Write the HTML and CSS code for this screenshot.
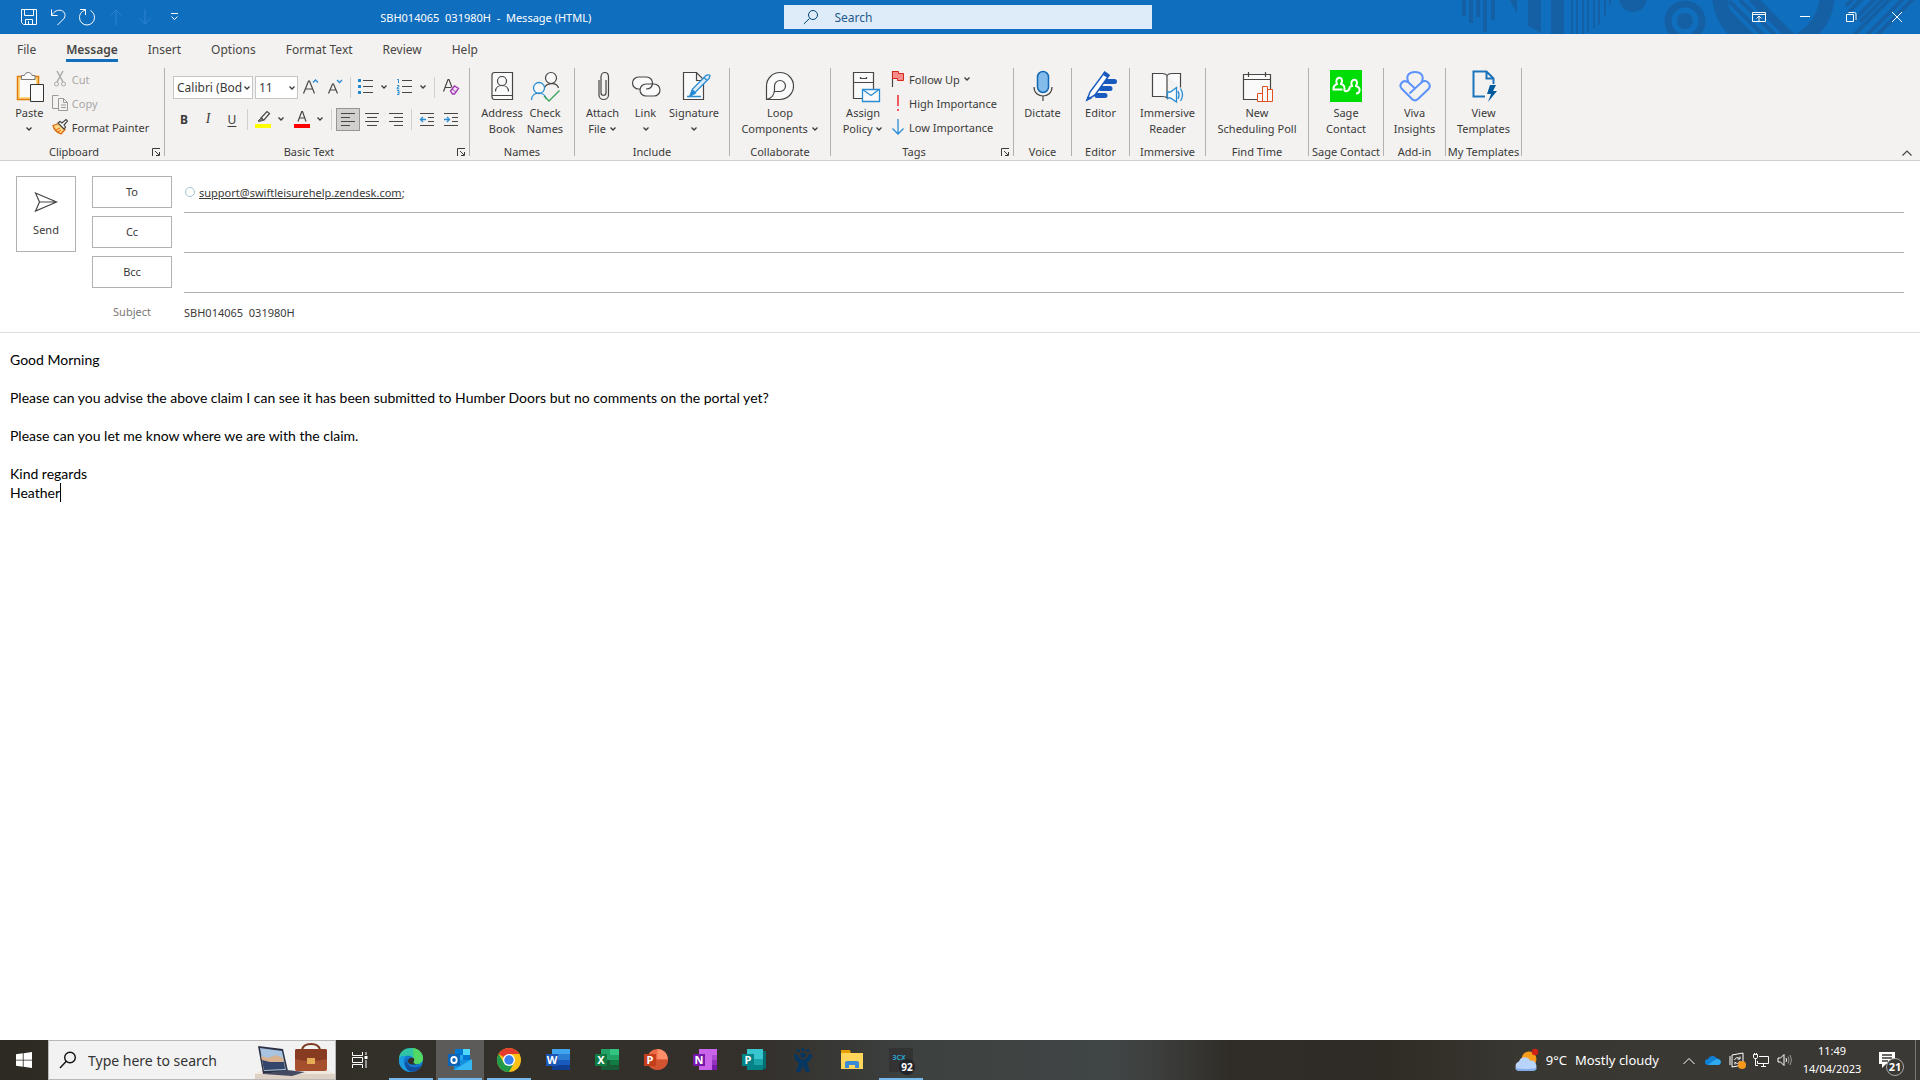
FILE: index.html
```html
<!DOCTYPE html>
<html lang="en">
<head>
    <meta charset="UTF-8">
    <meta name="viewport" content="width=device-width, initial-scale=1.0">
    <title>SBH014065 031980H - Message (HTML)</title>
    <link rel="stylesheet" href="styles.css">
</head>
<body>
    <!-- shared glyphs -->
    <svg class="defs" aria-hidden="true">
        <symbol id="chev" viewBox="0 0 8 8"><path d="M1.500 2.500 4 5l2.500-2.500" fill="none" stroke="currentColor" stroke-width="1.300"/></symbol>
        <symbol id="launcher" viewBox="0 0 9 9"><path d="M.5 8V.5H8M3 3l4 4M7.500 4v3.500H4" fill="none" stroke="currentColor"/></symbol>
    </svg>

    <header class="titlebar">
        <svg class="art" viewBox="0 0 470 34" aria-hidden="true">
            <g fill="#1560a4">
                <path d="M12 0h4v16h-4zM19 0h4v23h-4zM26 0h4v17h-4zM33 0h4v32h-4zM41 0h4v20h-4z"/>
                <path d="M60 0h7v14zM78 0h13v33l-13-7zM101 0h13v34h-13z"/>
                <path d="M121 0h2v34h-2zM126 0h2v34h-2zM132 0h2v34h-2zM137 0h2v32l-2 1zM143 0h2v28l-2 1zM148 0h2v24l-2 2zM154 0h2v15l-2 2zM159 0h2v4l-2 3z"/>
                <circle cx="183" cy="-2" r="14"/>
                <circle cx="235" cy="21" r="8"/>
            </g>
            <g fill="none" stroke="#1560a4">
                <circle cx="235" cy="21" r="17" stroke-width="7"/>
                <circle cx="323.500" cy="-7" r="54" stroke-width="15"/>
                <path d="M277 10l26 26M279 1l35 35M290 0l36 36" stroke-width="4"/>
                <path d="M302-2l40 40" stroke-width="9"/>
                <path d="M396 6l8-8M399 12l14-14M404 20l22-22M410 22l24-24M403 36l38-38M416 36l38-38M426 36l38-38" stroke-width="4"/>
            </g>
        </svg>
        <div class="title-left">
            <div class="quick">
                <button aria-label="Save"><svg width="18" height="18" viewBox="0 0 18 18"><path d="M1.500 1.500h15v15h-13l-2-2zM4.500 1.500v6h9v-6M5.500 16.500v-5h7v5M8.500 13v3"/></svg></button>
                <button aria-label="Undo"><svg width="18" height="18" viewBox="0 0 18 18"><path d="M2.500 1.500v6h6M2.500 7.500C5 3 9 1.500 12.500 2.500c4 1.500 4.500 6 2 8.500l-6 6"/></svg></button>
                <button aria-label="Redo"><svg width="18" height="18" viewBox="0 0 18 18"><path d="M2 1.500h5.500V7M7.500 2C3 3.500 1.500 6.500 1.500 9.500a7.500 7.500 0 0 0 15 0c0-3-1.500-5.500-4-7"/></svg></button>
                <button class="off" aria-label="Previous item"><svg width="18" height="18" viewBox="0 0 18 18"><path d="M9 17V2M3.500 7.500 9 2l5.500 5.500"/></svg></button>
                <button class="off" aria-label="Next item"><svg width="18" height="18" viewBox="0 0 18 18"><path d="M9 1v15M3.500 10.500 9 16l5.500-5.500"/></svg></button>
                <button aria-label="Customize toolbar"><svg width="18" height="18" viewBox="0 0 18 18"><path d="M6 5.500h7M6.500 8.500l3 3 3-3"/></svg></button>
            </div>
            <h1>SBH014065  031980H  -  Message (HTML)</h1>
        </div>
        <label class="search">
            <svg width="16" height="16" viewBox="0 0 16 16"><circle cx="10" cy="6" r="4.500"/><path d="M6.500 9.500.800 15"/></svg>
            <input type="text" placeholder="Search" aria-label="Search">
        </label>
        <div class="window-buttons">
            <button aria-label="Ribbon display options"><svg width="14" height="12" viewBox="0 0 14 12"><path d="M.5 1.500h13v9H.5zM.5 3.500h13M7 10V5.500M4.500 7.500 7 5l2.500 2.500"/></svg></button>
            <button aria-label="Minimize"><svg width="10" height="12" viewBox="0 0 10 12"><path d="M0 5.500h10"/></svg></button>
            <button aria-label="Restore"><svg width="11" height="12" viewBox="0 0 11 12"><path d="M.5 3.500h7v7h-7zM2.500 1.500h6q1.500 0 1.500 1.500v6"/></svg></button>
            <button aria-label="Close"><svg width="12" height="12" viewBox="0 0 12 12"><path d="m1 1 10 10M11 1 1 11"/></svg></button>
        </div>
    </header>

    <nav class="tabs">
        <a href="#">File</a>
        <a href="#" class="active">Message</a>
        <a href="#">Insert</a>
        <a href="#">Options</a>
        <a href="#">Format Text</a>
        <a href="#">Review</a>
        <a href="#">Help</a>
    </nav>

    <section class="ribbon" aria-label="Ribbon">
        <div class="group clipboard">
            <div class="tools">
                <button class="big">
                    <svg width="32" height="32" viewBox="0 0 32 32"><path d="M4 7h22v23H4z" fill="#fcd885"/><path d="M4.500 6.500h21v23h-21z" fill="none" stroke="#e07b0c" stroke-width="1.500"/><path d="M7 10h16v17H7z" fill="#fafafa"/><path d="M8.500 9.500v-4h3c.5-4 7-4 7.500 0h3v4z" fill="#fafafa" stroke="#777"/><path d="M17.500 14.500h13v17h-13z" fill="#fafafa" stroke="#333"/></svg>
                    <span>Paste</span>
                    <svg class="chev"><use href="#chev"/></svg>
                </button>
                <div class="stack">
                    <button class="small" disabled><svg width="18" height="16" viewBox="0 0 18 16"><path d="m6 0 6 11M12 0 6 11" stroke="#aaa" fill="none" stroke-width="1.500"/><circle cx="5.500" cy="13" r="2" fill="none" stroke="#aaa"/><circle cx="12.500" cy="13" r="2" fill="none" stroke="#aaa"/></svg>Cut</button>
                    <button class="small" disabled><svg width="18" height="16" viewBox="0 0 18 16"><path d="M7 13.500H1.500V.5h6M7.500 3.500h5l4 4v8h-9zM12.500 3.500v4h4M10 10h5M10 12.500h5" stroke="#999" fill="none"/></svg>Copy</button>
                    <button class="small"><svg width="18" height="16" viewBox="0 0 18 16"><path d="m2 6.500 6-2 6 6-4 4.500C5 13 3 11 2 6.500z" fill="#fcd885" stroke="#e0660c" stroke-width="1.300"/><path d="m5 11 4-2M7 13l3-2" stroke="#e0660c"/><path d="m7 4 2-1.500 2 1.500 4-3.500 1.500 1.500L13 6l1.500 2-1.500 2z" fill="#fff" stroke="#444" stroke-width="1.200"/></svg>Format Painter</button>
                </div>
            </div>
            <footer class="more">Clipboard<button class="launcher" aria-label="Clipboard options"><svg><use href="#launcher"/></svg></button></footer>
        </div>

        <div class="group basic">
            <div class="tools rows">
                <div class="row">
                    <span class="combo font"><select aria-label="Font"><option>Calibri (Bod</option></select><svg class="chev"><use href="#chev"/></svg></span>
                    <span class="combo size"><select aria-label="Font size"><option>11</option></select><svg class="chev"><use href="#chev"/></svg></span>
                    <button class="ico" aria-label="Grow font"><svg width="18" height="18" viewBox="0 0 18 18"><path d="M1.500 15.500 6.500 3h1l5 12.500M3.500 11h7" class="ink"/><path d="m11 4.500 2.500-2.500L16 4.500" class="blue"/></svg></button>
                    <button class="ico" aria-label="Shrink font"><svg width="18" height="18" viewBox="0 0 18 18"><path d="M2.500 15.500 6.500 6h1l4 9.500M4 12h6" class="ink"/><path d="m11 2 2.500 2.500L16 2" class="blue"/></svg></button>
                    <i class="sep"></i>
                    <button class="ico" aria-label="Bullets"><svg width="18" height="18" viewBox="0 0 18 18"><path d="M1 1h3v3H1zM1 7h3v3H1zM1 13h3v3H1z" fill="#1e88d2"/><path d="M6 2.500h10M6 8.500h10M6 14.500h10" class="ink"/></svg></button>
                    <button class="drop" aria-label="Bullet styles"><svg class="chev"><use href="#chev"/></svg></button>
                    <button class="ico" aria-label="Numbering"><svg width="18" height="18" viewBox="0 0 18 18"><path d="M1 1.500h1.500V5M1 7.500h2v1.300l-2 1v1h2.300M1 12.500h2v4H1M1.500 14.500H3" class="blue thin"/><path d="M6 2.500h10M6 8.500h10M6 14.500h10" class="ink"/></svg></button>
                    <button class="drop" aria-label="Number styles"><svg class="chev"><use href="#chev"/></svg></button>
                    <i class="sep wide"></i>
                    <button class="ico" aria-label="Clear formatting"><svg width="18" height="18" viewBox="0 0 18 18"><path d="M1.500 13.500 6 1.500h1l3 8M3 9.500h6" class="ink"/><path d="m8.500 13 4-5 4 2.500-4 5.500h-2z" fill="#f3e3f6" stroke="#a33bb5" stroke-width="1.400"/><path d="m10 11 4 3" stroke="#a33bb5"/></svg></button>
                </div>
                <div class="row">
                    <button class="ico bold">B</button>
                    <button class="ico italic">I</button>
                    <button class="ico under">U</button>
                    <i class="sep"></i>
                    <button class="ico" aria-label="Highlight colour"><svg width="18" height="18" viewBox="0 0 18 18"><path d="m7 8 6-6.500 2.500 2L10 10z" fill="#fafafa" class="ink"/><path d="m7 8-3 3 1.500.500 4.500-1.500-3-2z" fill="#777" stroke="#555"/><path d="M1 14h16v4H1z" fill="#ff0"/></svg></button>
                    <button class="drop" aria-label="Highlight colours"><svg class="chev"><use href="#chev"/></svg></button>
                    <button class="ico gap" aria-label="Font colour"><svg width="18" height="18" viewBox="0 0 18 18"><path d="M5 11.500 8.700 1.500h.8l3.500 10M6.500 8h5" class="ink"/><path d="M1 14h16v4H1z" fill="red"/></svg></button>
                    <button class="drop" aria-label="Font colours"><svg class="chev"><use href="#chev"/></svg></button>
                    <i class="sep wide"></i>
                    <button class="ico pressed" aria-label="Align left"><svg width="16" height="16" viewBox="0 0 16 16"><path d="M1 2.500h14M1 6.500h9M1 10.500h14M1 14.500h9" class="ink"/></svg></button>
                    <button class="ico" aria-label="Center"><svg width="16" height="16" viewBox="0 0 16 16"><path d="M1 2.500h14M3 6.500h10M1 10.500h14M3 14.500h10" class="ink"/></svg></button>
                    <button class="ico" aria-label="Align right"><svg width="16" height="16" viewBox="0 0 16 16"><path d="M1 2.500h14M6 6.500h9M1 10.500h14M6 14.500h9" class="ink"/></svg></button>
                    <i class="sep"></i>
                    <button class="ico" aria-label="Decrease indent"><svg width="16" height="16" viewBox="0 0 16 16"><path d="M1 2.500h14M9 6.500h6M9 10.500h6M1 14.500h14" class="ink"/><path d="M7 8.500H1.500M4 6 1.500 8.500 4 11" class="blue"/></svg></button>
                    <button class="ico" aria-label="Increase indent"><svg width="16" height="16" viewBox="0 0 16 16"><path d="M1 2.500h14M9 6.500h6M9 10.500h6M1 14.500h14" class="ink"/><path d="M1 8.500h5.500M4 6l2.500 2.500L4 11" class="blue"/></svg></button>
                </div>
            </div>
            <footer class="more">Basic Text<button class="launcher" aria-label="Font options"><svg><use href="#launcher"/></svg></button></footer>
        </div>

        <div class="group names">
            <div class="tools">
                <button class="big">
                    <svg width="32" height="32" viewBox="0 0 32 32"><path d="M8.500 2.500h18v27h-18q-2.500 0-2.500-2.500v-22q0-2.500 2.500-2.500zM6 25.500h20.500" fill="#fafafa" class="ink"/><circle cx="16" cy="11" r="4.500" class="ink"/><path d="M9.500 21.500c0-8 13-8 13 0" class="ink"/></svg>
                    <span>Address<br>Book</span>
                </button>
                <button class="big">
                    <svg width="32" height="32" viewBox="0 0 32 32"><circle cx="22" cy="8" r="5.500" fill="#fafafa" class="ink"/><path d="M15 19c2-7 13-7 14.500-1" class="ink"/><circle cx="10" cy="18" r="5.500" fill="#fafafa" class="blue"/><path d="M2.500 30c0-9 13-9 15-1" class="blue"/><path d="m15 26 5 5L30.500 20.500" stroke="#3da35d" stroke-width="1.400" fill="none"/></svg>
                    <span>Check<br>Names</span>
                </button>
            </div>
            <footer>Names</footer>
        </div>

        <div class="group include">
            <div class="tools">
                <button class="big">
                    <svg width="32" height="32" viewBox="0 0 32 32"><path d="M19 10v13c0 3-5 3-5 0V7c0-6 7.500-6 7.500 0v18c0 6-9.500 6-9.500 0V10" class="ink"/></svg>
                    <span>Attach<br>File <svg class="chev"><use href="#chev"/></svg></span>
                </button>
                <button class="big">
                    <svg width="32" height="32" viewBox="0 0 32 32"><rect x="2.500" y="7" width="20" height="12" rx="6" fill="#fafafa" class="ink"/><rect x="10" y="14" width="20" height="12" rx="6" fill="#fafafa" class="ink"/><path d="M16 19c4 0 6.500-2 6.500-6" class="ink"/></svg>
                    <span>Link</span>
                    <svg class="chev"><use href="#chev"/></svg>
                </button>
                <button class="big wider">
                    <svg width="32" height="32" viewBox="0 0 32 32"><path d="M5.500 2.500h13l7 7v20h-20zM18.500 2.500v8h7" fill="#fafafa" class="ink"/><path d="m12 26 2.500-7L28 5.500c1-1 3.500-.5 4 0-.5 1-.5 2.500-1 3L17.500 22zM26 7.500l3 3" fill="#dcecf8" class="blue"/><path d="m12 26 2.500-6 3 3zM9 26.500h14" fill="#1e88d2" class="blue"/></svg>
                    <span>Signature</span>
                    <svg class="chev"><use href="#chev"/></svg>
                </button>
            </div>
            <footer>Include</footer>
        </div>

        <div class="group loop">
            <div class="tools">
                <button class="big">
                    <svg width="32" height="32" viewBox="0 0 32 32"><path d="M2.500 29.500V16A13.500 13.500 0 1 1 16 29.500zM2.500 29.500c5-1 8-5 8-9.500v-4A5.500 5.500 0 1 1 16 21.500h-6" fill="#fafafa" class="ink"/></svg>
                    <span>Loop<br>Components <svg class="chev"><use href="#chev"/></svg></span>
                </button>
            </div>
            <footer>Collaborate</footer>
        </div>

        <div class="group tags">
            <div class="tools">
                <button class="big">
                    <svg width="32" height="32" viewBox="0 0 32 32"><path d="M6.500 2.500h20v26h-20zM6.500 12.500h20M13.500 7v1.500h6V7" fill="#fafafa" class="ink"/><path d="M15.500 19.500h17v12h-17z" fill="#fafafa" class="blue"/><path d="m15.500 19.500 8.500 6 8-6" class="blue"/></svg>
                    <span>Assign<br>Policy <svg class="chev"><use href="#chev"/></svg></span>
                </button>
                <div class="stack">
                    <button class="small"><svg width="16" height="18" viewBox="0 0 16 18"><path d="M2.500 1v16" class="ink"/><path d="M2.500 1.500h6v2h5v7h-6v-2h-5z" fill="#f98b8b" stroke="#d6271d"/></svg>Follow Up <svg class="chev"><use href="#chev"/></svg></button>
                    <button class="small"><svg width="16" height="18" viewBox="0 0 16 18"><path d="M7 1h2v11H7zM7 15h2v2H7z" fill="#ee5a5f"/></svg>High Importance</button>
                    <button class="small"><svg width="16" height="18" viewBox="0 0 16 18"><path d="M8 1v15M2.500 10.500 8 16l5.500-5.500" class="blue"/></svg>Low Importance</button>
                </div>
            </div>
            <footer class="more">Tags<button class="launcher" aria-label="Tag options"><svg><use href="#launcher"/></svg></button></footer>
        </div>

        <div class="group voice">
            <div class="tools">
                <button class="big">
                    <svg width="32" height="32" viewBox="0 0 32 32"><rect x="10.500" y="1.500" width="11" height="21" rx="5.500" fill="#83bbea" stroke="#1269b5" stroke-width="1.500"/><path d="M7 17c0 12 18 12 18 0M16 26v5" class="ink"/></svg>
                    <span>Dictate</span>
                </button>
            </div>
            <footer>Voice</footer>
        </div>

        <div class="group editor">
            <div class="tools">
                <button class="big">
                    <svg width="32" height="32" viewBox="0 0 32 32"><path d="M20 11.500h9.500M16 18.500h9M12 25.500h8" stroke="#185abd" stroke-width="5" stroke-linecap="round"/><path d="m2 30 3-8L19.500 2.500l4.500 3L10 25z" fill="#fff" stroke="#185abd" stroke-width="1.500"/><path d="m17.500 4.500 2-3.500 5 3.500-2 3.500zM1 31l2-5 4 2.500z" fill="#185abd"/></svg>
                    <span>Editor</span>
                </button>
            </div>
            <footer>Editor</footer>
        </div>

        <div class="group immersive">
            <div class="tools">
                <button class="big">
                    <svg width="32" height="32" viewBox="0 0 32 32"><path d="M16 5.500c-1-1.500-3-2-5-2H1.500v23H11c2 0 4 0 5 1.500V5.500c1-1.500 3-2 5-2h8.500v14" fill="#fafafa" class="ink"/><path d="M16.500 22v6h3l6 4V17.500l-6 4.500z" fill="#fafafa" class="blue"/><path d="M27 21q2 4 0 8M29.500 18.500q4 6.500 0 12.500" class="blue"/></svg>
                    <span>Immersive<br>Reader</span>
                </button>
            </div>
            <footer>Immersive</footer>
        </div>

        <div class="group findtime">
            <div class="tools">
                <button class="big">
                    <svg width="32" height="32" viewBox="0 0 32 32"><path d="M2.500 4.500h27v25h-27zM2.500 9.500h27M7.500 2v5M24.500 2v5" fill="#fafafa" class="ink"/><path d="M16.500 23.500h5v8h-5zM21.500 16.500h5v15h-5zM26.500 19.500h5v12h-5z" fill="#fafafa" stroke="#e0501c"/></svg>
                    <span>New<br>Scheduling Poll</span>
                </button>
            </div>
            <footer>Find Time</footer>
        </div>

        <div class="group sage">
            <div class="tools">
                <button class="big">
                    <svg width="32" height="32" viewBox="0 0 32 32"><path d="M0 0h32v32H0z" fill="#00dc06"/><path d="M12.500 19.500H3.500c-.5-3 1-4.500 3.500-5.500-3-6 5-9 5-3 0 1.500-1 2-1 3 3 1 3.500 2 3.500 5.500-1 3 5 2 5-2 0-1 1.500-1 2.500-1.500-3-6 5-9 5-3 0 1.500-1 2-1 3 3 1 4 2.500 3.500 5-.5 2-2 2.500-3.500 2.500" fill="none" stroke="#fff" stroke-width="2"/></svg>
                    <span>Sage<br>Contact</span>
                </button>
            </div>
            <footer>Sage Contact</footer>
        </div>

        <div class="group viva">
            <div class="tools">
                <button class="big">
                    <svg width="32" height="32" viewBox="0 0 32 32"><path d="M9.500 12.500C6 5 11 2 16 2s10 3 6.500 10.500M9.500 12.500 16 18.500l7-6.500c5-3 10 3 6.500 7L19 29c-2 2-4 2-6 0L3 19c-4-4 1-10.500 6.500-6.500zM16 18.500l-5.500 5" fill="none" stroke="#5b93fb" stroke-width="2"/></svg>
                    <span>Viva<br>Insights</span>
                </button>
            </div>
            <footer>Add-in</footer>
        </div>

        <div class="group templates">
            <div class="tools">
                <button class="big">
                    <svg width="32" height="32" viewBox="0 0 32 32"><path d="M17 26.500H5.500V1.500h13l7 7V14M18.500 1.500V8.500h7" fill="none" stroke="#1b74bb" stroke-width="2"/><path d="m22 15h6l-3 6h4L20 32l3-8h-4z" fill="#005a9e"/></svg>
                    <span>View<br>Templates</span>
                </button>
            </div>
            <footer>My Templates</footer>
        </div>

        <button class="collapse" aria-label="Collapse the ribbon"><svg width="10" height="6" viewBox="0 0 10 6"><path d="m.5 5.500 4.500-4.500 4.500 4.500" class="ink"/></svg></button>
    </section>

    <form class="compose">
        <button type="button" class="send">
            <svg width="24" height="22" viewBox="0 0 24 22"><path d="m1.500 2 21 9-21 9 4-9zM5.500 11h17" class="ink"/></svg>
            Send
        </button>
        <div class="fields">
            <button type="button">To</button>
            <div class="line to"><span class="presence"></span><a href="mailto:support@swiftleisurehelp.zendesk.com">support@swiftleisurehelp.zendesk.com</a>;</div>
            <button type="button">Cc</button>
            <input class="line" type="text" aria-label="Cc">
            <button type="button">Bcc</button>
            <input class="line" type="text" aria-label="Bcc">
            <label for="subject">Subject</label>
            <input id="subject" class="subject" type="text" value="SBH014065  031980H">
        </div>
    </form>

    <main class="message" contenteditable="true" spellcheck="false" role="textbox" aria-label="Message body">
        <p>Good Morning</p>
        <p><br></p>
        <p>Please can you advise the above claim I can see it has been submitted to Humber Doors but no comments on the portal yet?</p>
        <p><br></p>
        <p>Please can you let me know where we are with the claim.</p>
        <p><br></p>
        <p>Kind regards</p>
        <p><span class="caret">Heather</span></p>
    </main>

    <footer class="taskbar">
        <button class="start" aria-label="Start"><svg width="16" height="16" viewBox="0 0 16 16"><path d="M0 2.200 6.800 1.300v6.400H0zM7.600 1.200 16 0v7.700H7.600zM0 8.400h6.800v6.400L0 13.800zM7.600 8.400H16V16l-8.400-1.200z" fill="#fff"/></svg></button>
        <label class="tasksearch">
            <svg width="18" height="18" viewBox="0 0 18 18"><circle cx="11" cy="6.500" r="5.300"/><path d="M7.300 10.300 1 17"/></svg>
            <input type="text" placeholder="Type here to search" aria-label="Type here to search">
            <svg width="80" height="38" viewBox="0 0 80 38">
                <path d="M0 33 7 29h66l7 4v5H0z" fill="#f0e8df"/><path d="M0 33h80v5H0z" fill="#ddd0c4"/>
                <path d="m3 5 25 3 5 22-25 3z" fill="#2c3146"/><path d="m5 7 22 3 4 19-22 1z" fill="#a9c4e0"/><path d="m6 15 7 2 8-3 7 3 2 10-21 2z" fill="#d9b18e"/><path d="m7 19 8 2 14 0 1 7-21 1z" fill="#34466b"/><path d="m8 33 24-4 18 2-13 4z" fill="#454a63"/>
                <path d="M47 9q1-6 9-6t9 6" fill="none" stroke="#7c3a22" stroke-width="2"/><rect x="40" y="8" width="32" height="22" rx="2" fill="#a64f2e"/><path d="M40 10q0-2 2-2h28q2 0 2 2v8q-16 4-32 0z" fill="#873b21"/><path d="M52 17h8v6h-8z" fill="#e5ac55"/>
            </svg>
        </label>
        <div class="apps">
            <button class="taskview" aria-label="Task view"><svg width="17" height="16" viewBox="0 0 17 16"><path d="M1.500 0v3.500h10V0M1.500 16v-3.500h10V16M1.500 5.500h10v5h-10zM15 0v3M15 8v8" fill="none" stroke="#fff"/><path d="M13.500 4h3v3h-3z" fill="#fff"/></svg></button>
            <button class="running" aria-label="Edge"><svg width="24" height="24" viewBox="0 0 24 24"><circle cx="12" cy="12" r="12" fill="#1479cd"/><path d="M0 10C1 3 6 0 12 0c8 0 12 6 12 10 0 4-3 6-6 6-4 0-4-1-3-3 0-5-5-6-8-5-3 0-6 1-7 4z" fill="#2fc5a5"/><path d="M14 0c7 1 10 6 10 10 0 4-3 6-6 6-4 0-4-1-3-3z" fill="#54d864"/><path d="M7 8C2 12 5 22 14 24 6 25-1 19 0 11c1-3 4-4 7-3z" fill="#1b9be0"/><path d="M9 11c-3 5 3 11 13 7-3 5-8 6-11 5.500C5 21 5 13 9 11z" fill="#114e9c"/><path d="M11 10c4-1 5 1 4 3-1 1-1 3 3 3-2 1-8 1-9-2 0-2 0-3 2-4z" fill="#332f29"/></svg></button>
            <button class="running current" aria-label="Outlook"><svg width="24" height="24" viewBox="0 0 24 24"><path d="M7 1h15v13H7z" fill="#28a8ea"/><path d="M7 1h8v6H7zM15 7h7v6h-7z" fill="#0078d4"/><path d="M15 1h7v6h-7z" fill="#50d9ff"/><path d="M6 12h18v10H6z" fill="#1490df"/><path d="m6 22 18-11v11z" fill="#35b8f1"/><path d="M0 6h12v12H0z" fill="#0f64b8"/><ellipse cx="6" cy="12" rx="2.700" ry="3" fill="none" stroke="#fff" stroke-width="1.800"/></svg></button>
            <button class="running" aria-label="Chrome"><svg width="24" height="24" viewBox="0 0 24 24"><circle cx="12" cy="12" r="12" fill="#fbc116"/><path d="M12 12 1.600 6A12 12 0 0 1 22.400 6H12z" fill="#e33b2e"/><path d="M1.600 6A12 12 0 0 0 12 24l5-9-5-3-5 3z" fill="#229a4b"/><circle cx="12" cy="12" r="6" fill="#fff"/><circle cx="12" cy="12" r="4.700" fill="#3880ee"/></svg></button>
            <button aria-label="Word"><svg width="24" height="24" viewBox="0 0 24 24"><path d="M6 1h18v6H6z" fill="#41a5ee"/><path d="M6 6h18v6H6z" fill="#2b7cd3"/><path d="M6 12h18v5H6z" fill="#185abd"/><path d="M6 17h18v5H6z" fill="#103f91"/><path d="M0 6h12v12H0z" fill="#1c56b5"/><text x="6" y="16">W</text></svg></button>
            <button aria-label="Excel"><svg width="24" height="24" viewBox="0 0 24 24"><path d="M6 1h18v21H6z" fill="#21a366"/><path d="M15 1h9v6h-9z" fill="#33c481"/><path d="M6 12h18v10H6z" fill="#185c37"/><path d="M15 12h9v5h-9z" fill="#107c41"/><path d="M0 6h12v12H0z" fill="#107c41"/><text x="6" y="16">X</text></svg></button>
            <button aria-label="PowerPoint"><svg width="24" height="24" viewBox="0 0 24 24"><circle cx="13.500" cy="11.500" r="10.500" fill="#ed6c47"/><path d="M13.500 1A10.500 10.500 0 0 1 24 11.500H13.500z" fill="#ff8f6b"/><path d="M3 11.500h21a10.500 10.500 0 0 1-21 0z" fill="#d35230"/><path d="M0 6h12v12H0z" fill="#c43e1c"/><text x="6" y="16">P</text></svg></button>
            <button aria-label="OneNote"><svg width="24" height="24" viewBox="0 0 24 24"><path d="M6 1h18v21H6z" fill="#ca64ea"/><path d="M19 7h5v5h-5z" fill="#ae4bd5"/><path d="M19 12h5v5h-5z" fill="#9332bf"/><path d="M19 17h5v5h-5z" fill="#7719aa"/><path d="M0 6h12v12H0z" fill="#7719aa"/><text x="6" y="16">N</text></svg></button>
            <button aria-label="Publisher"><svg width="24" height="24" viewBox="0 0 24 24"><path d="M18 3h6v18h-6z" fill="#036c70"/><path d="M5 1h16v21H5z" fill="#1ba4a8"/><path d="M5 1h16v10H5z" fill="#37c6d0"/><path d="M5 17h16v5H5z" fill="#038387"/><path d="M0 6h12v12H0z" fill="#038387"/><text x="6" y="16">P</text></svg></button>
            <button aria-label="Jira"><svg width="24" height="24" viewBox="0 0 24 24"><g fill="#063763"><circle cx="7" cy="2.500" r="1.600"/><circle cx="12" cy="1.500" r="1.600"/><circle cx="17" cy="2.500" r="1.600"/><circle cx="12" cy="7" r="2.600"/><path d="M3 6h3q1 4 6 6 5-2 6-6h3q0 6-5 9l3 9h-4l-3-6-3 6H5l3-9Q3 12 3 6z"/></g></svg></button>
            <button aria-label="File Explorer"><svg width="24" height="24" viewBox="0 0 24 24"><path d="M1 2h9l1 4H1z" fill="#e8a000"/><path d="M1 5h22v16H1z" fill="#ffd55a"/><path d="M5 20v-5q0-2 2-2h10q2 0 2 2v5h-4v-3H9v3z" fill="#3b8ad8"/></svg></button>
            <button class="running" aria-label="3CX"><svg width="28" height="28" viewBox="0 0 28 28"><path d="M2 2h24v24H2z" fill="#333"/><text class="brand" x="12" y="14">3CX</text><circle cx="20" cy="21" r="8" fill="#23242b"/><text class="count" x="20" y="25">92</text></svg></button>
        </div>
        <div class="tray">
            <button class="weather"><svg width="24" height="24" viewBox="0 0 24 24"><circle cx="15" cy="11" r="7.500" fill="#f89c1c"/><circle cx="21" cy="4" r="3.200" fill="#cf2318"/><path d="M5 23a5 5 0 0 1 0-9.500 6 6 0 0 1 11-1 5.500 5.500 0 0 1 3 10.500z" fill="#b9d4fa"/><path d="M1 20q1 3 4 3h14q3 0 4-3-10 2-22 0z" fill="#83abe9"/></svg><span>9°C</span><span>Mostly cloudy</span></button>
            <button class="icon" aria-label="Show hidden icons"><svg width="14" height="9" viewBox="0 0 14 9"><path d="m1.500 8 5.500-5.500L12.500 8" class="white"/></svg></button>
            <button class="icon" aria-label="OneDrive"><svg width="16" height="10" viewBox="0 0 16 10"><path d="M3 10a3 3 0 0 1 0-6 5 5 0 0 1 9-.5A3.300 3.300 0 0 1 13 10z" fill="#0f7fd8"/><path d="m3 10 8-6q5 0 5 3.500Q15 10 13 10z" fill="#2fa9ef"/></svg></button>
            <button class="icon" aria-label="Updates"><svg width="17" height="17" viewBox="0 0 17 17"><path d="m3 3 11-2v12L3 15zM1 4v9M5.500 8c1-3 4-3 5.500-1V4.500M11 7H8.500M11 9c-1 3-4 3-5 1v2.500" class="white"/><circle cx="13" cy="13" r="4" fill="#f7981d"/></svg></button>
            <button class="icon" aria-label="Network"><svg width="16" height="14" viewBox="0 0 16 14"><path d="M6 3.500h9.500v7H4.500V8M8 13.500h5M10.500 11v2.500M.5 1.500h4v3q0 1-2 1t-2-1zM2.500 5.500v7H5M1.500 0v1M3.500 0v1" class="white"/></svg></button>
            <button class="icon" aria-label="Volume"><svg width="16" height="14" viewBox="0 0 16 14"><path d="M1 5h2.500L7 1.500v11L3.500 9H1zM9 5q1 2 0 4" class="white"/><path d="M11 3.500q2 3.500 0 7M13 2q3 5 0 10" stroke="#999" fill="none"/></svg></button>
            <button class="clock"><time>11:49</time><span>14/04/2023</span></button>
            <button class="notes" aria-label="Notifications"><svg width="26" height="24" viewBox="0 0 26 24"><path d="M1 4h16v12H8l-4 4v-4H1z" fill="#fff"/><path d="M4 7h10M4 10h10M4 13h6" stroke="#3a3833" stroke-width="1.500"/><circle cx="17" cy="19" r="8.500" fill="#3a3833" stroke="#aaa"/><text x="17" y="23">21</text></svg></button>
            <button class="desktop" aria-label="Show desktop"></button>
        </div>
    </footer>
</body>
</html>
```
FILE: styles.css
```css
* {
    box-sizing: border-box;
}
body {
    margin: 0;
    min-height: 100vh;
    display: flex;
    flex-direction: column;
    background: #fff;
    font-family: "Noto Sans", "Open Sans", sans-serif;
    font-size: 11px;
    color: #3b3a39;
}
button, input, select {
    font: inherit;
    color: inherit;
    background: none;
    border: 0;
    padding: 0;
    margin: 0;
}
input {
    outline: 0;
    min-width: 0;
}
svg {
    flex: none;
    overflow: visible;
}
.defs {
    position: absolute;
    width: 0;
    height: 0;
}
.ink {
    stroke: #484644;
    stroke-width: 1.2;
}
.blue {
    stroke: #2a8dd4;
    stroke-width: 1.3;
}
.thin {
    stroke-width: 1;
}
.white {
    stroke: #fff;
    fill: none;
}
.ink:not([fill]), .blue:not([fill]) {
    fill: none;
}
.chev {
    width: 8px;
    height: 8px;
}

/* title bar */
.titlebar {
    position: relative;
    display: grid;
    grid-template-columns: 1fr 368px 1fr;
    align-items: center;
    height: 34px;
    padding-left: 15px;
    background: #106ebe;
    color: #fff;
}
.titlebar svg {
    fill: none;
    stroke: currentColor;
}
.titlebar .art {
    position: absolute;
    right: 0;
    top: 0;
    width: 470px;
    height: 34px;
    overflow: hidden;
    stroke: none;
}
.title-left, .quick, .window-buttons {
    display: flex;
    align-items: center;
}
.quick {
    gap: 1px;
}
.quick button {
    display: flex;
    width: 28px;
    justify-content: center;
}
.quick .off {
    color: #2b82d4;
}
.titlebar h1 {
    flex: 1;
    margin: 0;
    text-align: center;
    font-size: 11px;
    font-weight: normal;
    white-space: pre;
}
.search {
    display: flex;
    align-items: center;
    gap: 16px;
    height: 24px;
    padding-left: 19px;
    background: #deecf9;
    color: #004578;
    font-size: 12px;
}
.search input {
    flex: 1;
}
.search input::placeholder {
    color: #1f5a8c;
    opacity: 1;
}
.window-buttons {
    position: relative;
    justify-content: flex-end;
}
.window-buttons button {
    display: flex;
    align-items: center;
    justify-content: center;
    width: 46px;
    height: 32px;
}

/* tabs */
.tabs {
    display: flex;
    gap: 30px;
    height: 34px;
    padding: 6px 17px 0;
    background: #f3f2f1;
    font-size: 12px;
}
.tabs a {
    height: 22px;
    line-height: 20px;
    color: #484644;
    text-decoration: none;
}
.tabs .active {
    font-weight: 600;
    border-bottom: 3px solid #106ebe;
}

/* ribbon */
.ribbon {
    position: relative;
    display: flex;
    height: 93px;
    background: #f3f2f1;
    border-bottom: 1px solid #d2d0ce;
}
.group {
    display: flex;
    flex-direction: column;
    height: 88px;
    border-right: 1px solid #b3b0ad;
}
.clipboard { width: 165px; }
.basic { width: 305px; }
.names { width: 105px; }
.include { width: 155px; }
.loop { width: 101px; }
.tags { width: 183px; }
.voice, .editor { width: 58px; }
.immersive { width: 76px; }
.findtime { width: 103px; }
.sage { width: 75px; }
.viva { width: 62px; }
.templates { width: 76px; }

.tools {
    display: flex;
    flex: 1;
    justify-content: center;
}
.big {
    display: flex;
    flex-direction: column;
    align-items: center;
    min-width: 43px;
    padding-top: 2px;
    line-height: 16px;
    white-space: nowrap;
}
.big > svg:first-child {
    margin-bottom: 3px;
}
.big > .chev {
    margin-top: 4px;
}
.wider {
    min-width: 54px;
}
.include .tools {
    padding-right: 2px;
}
.names .tools {
    padding-left: 3px;
}
.stack {
    display: flex;
    flex-direction: column;
}
.small {
    display: flex;
    align-items: center;
    gap: 3px;
    height: 24px;
    padding-bottom: 2px;
    white-space: nowrap;
}
.small:disabled {
    color: #a9a7a5;
}
.clipboard .stack {
    padding-right: 7px;
}
.tags .big {
    min-width: 54px;
}
.tags .stack {
    padding-right: 11px;
}
.group footer {
    position: relative;
    height: 8px;
    line-height: 8px;
    text-align: center;
    white-space: nowrap;
}
.group .more {
    padding-right: 16px;
}
.launcher {
    position: absolute;
    right: 3px;
    top: 0;
    width: 9px;
    height: 9px;
}
.launcher svg {
    display: block;
    width: 9px;
    height: 9px;
}

/* font and paragraph tools */
.rows {
    flex-direction: column;
    justify-content: flex-start;
    gap: 8px;
    padding: 7px 0 0 7px;
}
.row {
    display: flex;
    align-items: center;
    height: 24px;
}
.combo {
    position: relative;
}
.combo select {
    appearance: none;
    display: block;
    width: 100%;
    height: 23px;
    padding: 0 3px;
    background: #fff;
    border: 1px solid #c8c6c4;
    font-size: 12px;
}
.combo .chev {
    position: absolute;
    right: 2px;
    top: 8px;
    pointer-events: none;
}
.font {
    width: 80px;
    margin: 0 2px 0 1px;
}
.size {
    width: 43px;
    margin-right: 1px;
}
.ico {
    display: flex;
    align-items: center;
    justify-content: center;
    width: 24px;
    height: 23px;
    font-size: 12px;
}
.drop {
    display: flex;
    align-items: center;
    justify-content: center;
    width: 12px;
    height: 23px;
}
.bold { font-weight: 700; }
.italic { font-family: "Liberation Serif", serif; font-style: italic; font-size: 14px; }
.under { text-decoration: underline; text-underline-offset: 2px; }
.gap {
    margin-left: 3px;
}
.drop + .ico:not(.gap) {
    margin-left: 3px;
}
.pressed {
    background: #d2d0ce;
    border: 1px solid #979593;
}
.sep {
    width: 1px;
    height: 21px;
    margin: 0 3px;
    background: #d2d0ce;
}
.sep.wide {
    margin: 0 4px 0 5px;
}
.collapse {
    position: absolute;
    right: 8px;
    bottom: 4px;
    display: flex;
}

/* address block */
.compose {
    display: flex;
    align-items: flex-start;
    gap: 16px;
    padding: 15px 16px 0;
    border-bottom: 1px solid #e1dfdd;
}
.send {
    display: flex;
    flex-direction: column;
    align-items: center;
    justify-content: center;
    gap: 9px;
    width: 60px;
    height: 76px;
    border: 1px solid #b3b0ad;
    line-height: 16px;
}
.fields {
    flex: 1;
    display: grid;
    grid-template-columns: 80px 1fr;
    grid-template-rows: 40px 40px 40px 36px;
    column-gap: 12px;
}
.fields button {
    height: 32px;
    padding-bottom: 1px;
    border: 1px solid #b3b0ad;
}
.fields label {
    line-height: 32px;
    text-align: center;
    color: #797775;
}
.line {
    height: 37px;
    border-bottom: 1px solid #b3b0ad;
}
.subject {
    height: 32px;
}
.to {
    display: flex;
    align-items: center;
    padding-bottom: 4px;
}
.to a {
    color: inherit;
}
.presence {
    width: 10px;
    height: 10px;
    margin: 0 4px 0 1px;
    border: 1px solid #a3c5d0;
    border-radius: 50%;
}

/* message body */
.message {
    flex: 1;
    padding: 17px 10px;
    outline: 0;
    font-family: Lato, "Liberation Sans", sans-serif;
    font-size: 14px;
    line-height: 19px;
    color: #000;
}
.message p {
    margin: 0;
}
.caret {
    display: inline-block;
    border-right: 1px solid #000;
}

/* taskbar */
.taskbar {
    display: flex;
    height: 40px;
    background: linear-gradient(to right, #2d2a24, #33302a 20%, #33302b 35%, #34312d 40%, #3d4241 48%, #404545 58%, #3d3f3e 60%, #302d28 64%, #2f2b25 72%, #393731 79%, #3b3935);
    color: #fff;
}
.taskbar button {
    display: flex;
    align-items: center;
    justify-content: center;
}
.taskbar text {
    fill: #fff;
    text-anchor: middle;
    font-size: 11px;
    font-weight: 700;
}
.taskbar .brand {
    fill: #2b9fd0;
    font-size: 7px;
}
.taskbar .count {
    font-size: 10px;
}
.start {
    width: 48px;
}
.tasksearch {
    display: flex;
    align-items: center;
    gap: 11px;
    width: 288px;
    padding-left: 10px;
    background: #f2f2f2;
    border: 1px solid #b9b8b6;
}
.tasksearch > svg:first-child {
    fill: none;
    stroke: #111;
    stroke-width: 1.4;
}
.tasksearch input {
    flex: 1;
    font-size: 14px;
}
.tasksearch input::placeholder {
    color: #333;
    opacity: 1;
}
.apps {
    display: flex;
    gap: 1px;
}
.apps button {
    width: 48px;
    padding-top: 2px;
    border-bottom: 2px solid transparent;
}
.apps .taskview {
    width: 47px;
    margin-right: 3px;
}
.apps .running {
    border-image: linear-gradient(to right, transparent 4px, #76b9ed 4px, #76b9ed 44px, transparent 44px) 2;
}
.apps .current {
    background: #5c5b59;
}
.tray {
    display: flex;
    margin-left: auto;
}
.weather {
    gap: 8px;
    margin-right: 18px;
    font-size: 13px;
}
.icon {
    width: 24px;
}
.taskbar .clock {
    flex-direction: column;
    width: 70px;
    font-size: 11px;
    line-height: 18px;
}
.notes {
    width: 48px;
}
.desktop {
    width: 5px;
    border-left: 1px solid #777;
}
```
